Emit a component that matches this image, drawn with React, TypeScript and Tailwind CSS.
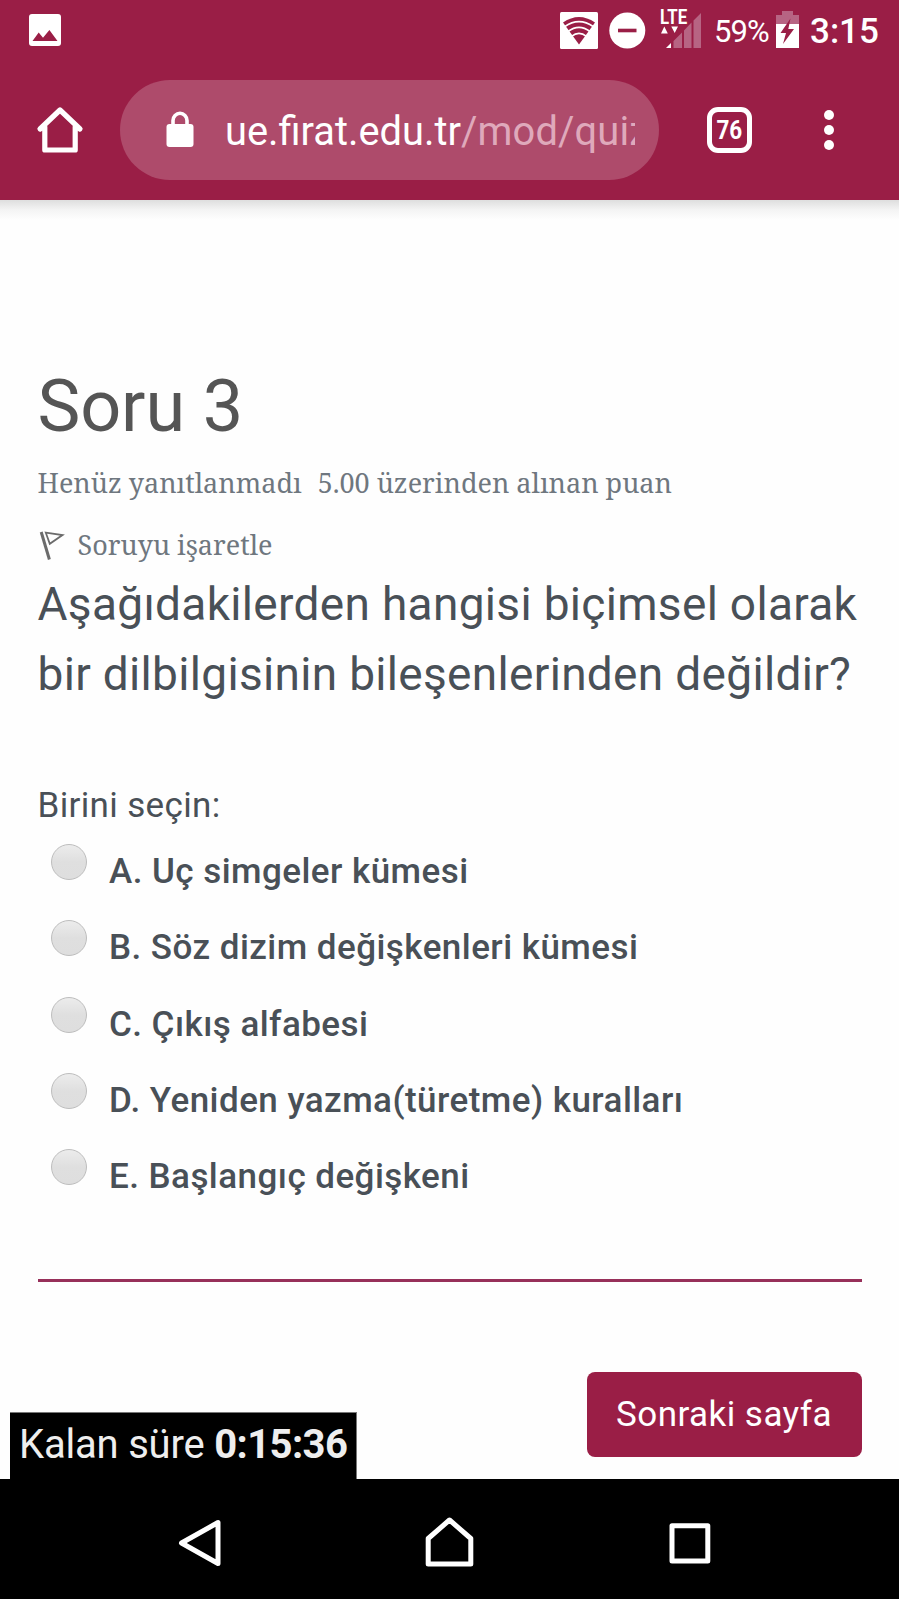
const options = [
  "A. Uç simgeler kümesi",
  "B. Söz dizim değişkenleri kümesi",
  "C. Çıkış alfabesi",
  "D. Yeniden yazma(türetme) kuralları",
  "E. Başlangıç değişkeni",
];

function StatusBar() {
  return (
    <div className="flex h-[60px] items-start pl-[29px] text-white">
      <svg className="mt-[14px]" width="32" height="32" viewBox="0 0 32 32">
        <rect width="32" height="32" rx="3" fill="#fff" />
        <path d="M3.5 27 L9.7 18.5 L14 23.8 L20.4 16 L28.5 27 Z" fill="#9a1e46" />
      </svg>
      <svg className="ml-[499px] mt-3" width="38" height="37" viewBox="0 0 38 37">
        <rect width="38" height="37" rx="1.5" fill="#fff" />
        <path d="M3 10.5 Q19 -0.5 35 10.5 L19 32.5 Z" fill="#9a1e46" />
        <g fill="none" stroke="#fff" strokeWidth="1.7">
          <path d="M4.5 14.8 Q19 4.5 33.5 14.8" />
          <path d="M8 19.5 Q19 11.3 30 19.5" />
          <path d="M11.5 24.3 Q19 18.3 26.5 24.3" />
        </g>
      </svg>
      <svg className="ml-[11px] mt-3" width="37" height="37" viewBox="0 0 37 37">
        <circle cx="18.3" cy="18.5" r="18" fill="#fff" />
        <rect x="9" y="16.7" width="18.5" height="3.6" fill="#9a1e46" />
      </svg>
      <div className="relative ml-[14px] h-[50px] w-[42px]">
        <svg width="42" height="50" viewBox="0 0 42 50">
          <path d="M41 13 V48 H33.5 V20.5 Z M31.5 22.5 V48 H24 V30.5 Z M22 32.5 V48 H13.5 V41 Z" fill="#b76483" />
          <path d="M11 43 V48 H6 Z" fill="#fff" />
          <path d="M1 33.5 L4.3 26.5 L7.8 33.5 Z M11.3 26.5 H18 L14.7 33 Z" fill="#fff" />
        </svg>
        <span className="absolute left-0 top-[7px] origin-left scale-x-[0.82] text-[20.5px] font-bold leading-5">
          LTE
        </span>
      </div>
      <span className="ml-3 w-[62px] text-[31px] leading-[63px] tracking-[-0.9px]">59%</span>
      <svg className="mt-[11px]" width="23" height="37" viewBox="0 0 23 37">
        <path d="M0 13 V4 H6 V0 H17 V4 H23 V13 Z" fill="#b76483" />
        <path d="M0 13 H23 V37 H0 Z" fill="#fff" />
        <path d="M14.5 7.5 L4.5 22 H10 L7 33 L18 18 H12.3 Z" fill="#9a1e46" />
      </svg>
      <span className="ml-[11px] text-[35px] font-medium leading-[63px]">3:15</span>
    </div>
  );
}

function BrowserBar() {
  return (
    <div className="flex h-[140px] items-start pl-9 text-white">
      <svg className="mt-[45px]" width="48" height="50" viewBox="0 0 48 50">
        <path
          d="M4 24 L24 5 L44 24 M8.8 22 V45 H39.2 V22"
          fill="none"
          stroke="#fff"
          strokeWidth="5.2"
          strokeLinecap="round"
          strokeLinejoin="round"
        />
      </svg>
      <div className="ml-9 mt-5 flex h-[100px] w-[539px] items-center rounded-full bg-[#ae4b6b] pl-[46px]">
        <svg className="-mt-[2px]" width="28" height="36" viewBox="0 0 28 36">
          <rect x="0.5" y="13" width="27" height="23" rx="3" fill="#fff" />
          <path d="M7 15 V9.5 A7 7.2 0 0 1 21 9.5 V15" fill="none" stroke="#fff" strokeWidth="3.6" />
        </svg>
        <div className="ml-[31px] mt-[3px] w-[410px] overflow-hidden whitespace-nowrap text-[39.8px] leading-[60px]">
          ue.firat.edu.tr<span className="tracking-[0.15px] text-[#dfa9bb]">/mod/quiz</span>
        </div>
      </div>
      <div className="ml-12 mt-[47px] flex h-[46px] w-[45px] items-center justify-center rounded-[11px] border-[5px] border-white">
        <span className="scale-x-90 text-[25px] font-bold leading-none">76</span>
      </div>
      <div className="ml-[72px] mt-[50px] flex flex-col gap-[5px]">
        <span className="size-[10px] rounded-full bg-white" />
        <span className="size-[10px] rounded-full bg-white" />
        <span className="size-[10px] rounded-full bg-white" />
      </div>
    </div>
  );
}

function NavigationBar() {
  return (
    <nav className="flex h-[120px] items-start bg-black pl-[178px]">
      <svg className="mt-10" width="44" height="48" viewBox="0 0 44 48" fill="none" stroke="#fff" strokeWidth="5" strokeLinejoin="round">
        <path d="M3.5 24 L40 3.5 V44.5 Z" />
      </svg>
      <svg className="ml-[202px] mt-[37px]" width="51" height="52" viewBox="0 0 51 52" fill="none" stroke="#fff" strokeWidth="5" strokeLinejoin="round">
        <path d="M4.2 22.5 L25.5 4 L46.8 22.5 V48 H4.2 Z" />
      </svg>
      <svg className="ml-[193px] mt-[43px]" width="43" height="43" viewBox="0 0 43 43" fill="none" stroke="#fff" strokeWidth="5" strokeLinejoin="round">
        <rect x="4" y="3.8" width="35.8" height="35.2" />
      </svg>
    </nav>
  );
}

export default function App() {
  return (
    <div className="flex h-[1599px] w-[899px] flex-col overflow-hidden bg-[#fefefe] font-['Roboto',sans-serif] text-[#495057]">
      <header className="h-[200px] shrink-0 bg-[#9a1e46]">
        <StatusBar />
        <BrowserBar />
      </header>

      <main className="relative h-[1279px] shrink-0 pl-[37.5px] pr-[37.5px]">
        <div className="absolute inset-x-0 top-0 h-5 bg-linear-to-b from-[#dedede] via-[#f4f4f4] to-[#fefefe]" />
        <h1 className="-mb-px pt-[164px] text-[72px] leading-[86px] tracking-[-0.1px] text-[#555]">Soru 3</h1>
        <div className="font-['Noto_Serif','DejaVu_Serif_Condensed',serif] text-[27px] text-[#6f777f]">
          <div className="flex gap-4 leading-[68px]">
            <span>Henüz yanıtlanmadı</span>
            <span>5.00 üzerinden alınan puan</span>
          </div>
          <div className="flex h-[52px] items-start pt-[3px]">
            <svg className="mt-[10px]" width="28" height="32" viewBox="0 0 28 32" fill="none" stroke="#6b6b6b">
              <path d="M3.2 2 L11.4 29.5" strokeWidth="3" />
              <path d="M7.8 2.7 L24.5 5 L11.8 13.8 Z" strokeWidth="1.8" />
            </svg>
            <span className="ml-3 leading-[50px]">Soruyu işaretle</span>
          </div>
        </div>
        <p className="whitespace-nowrap text-[46px] leading-[70px] tracking-[0.32px]">
          Aşağıdakilerden hangisi biçimsel olarak
          <br />
          bir dilbilgisinin bileşenlerinden değildir?
        </p>

        <p className="mt-[69px] text-[35px] leading-[56px] tracking-[0.35px]">Birini seçin:</p>
        <ul className="pl-[13px]">
          {options.map((option) => (
            <li key={option} className="flex h-[76.25px] items-start">
              <span className="mt-[10.2px] size-[36px] rounded-full border border-[#bdbdbd] bg-linear-to-b from-[#ececec] via-[#dfdfdf] to-[#dedede]" />
              <span className="ml-[22.5px] whitespace-nowrap text-[35px] font-medium leading-[76px] tracking-[0.45px]">
                {option}
              </span>
            </li>
          ))}
        </ul>

        <div className="mt-[64px] h-[3px] bg-[#97305a]" />
        <div className="mt-[90px] flex justify-end">
          <button className="h-[85px] w-[275px] rounded-lg bg-[#9a1e46] text-[35px] leading-[85px] tracking-[0.45px] text-white">
            Sonraki sayfa
          </button>
        </div>

        <div className="absolute bottom-0 left-[10px] h-[67px] w-[347px] whitespace-nowrap border-r border-t border-[#777] bg-black pl-[9px] text-[40px] leading-[64px] tracking-[-0.2px] text-[#eee]">
          Kalan süre <b className="tracking-[-0.6px]">0:15:36</b>
        </div>
      </main>

      <NavigationBar />
    </div>
  );
}
